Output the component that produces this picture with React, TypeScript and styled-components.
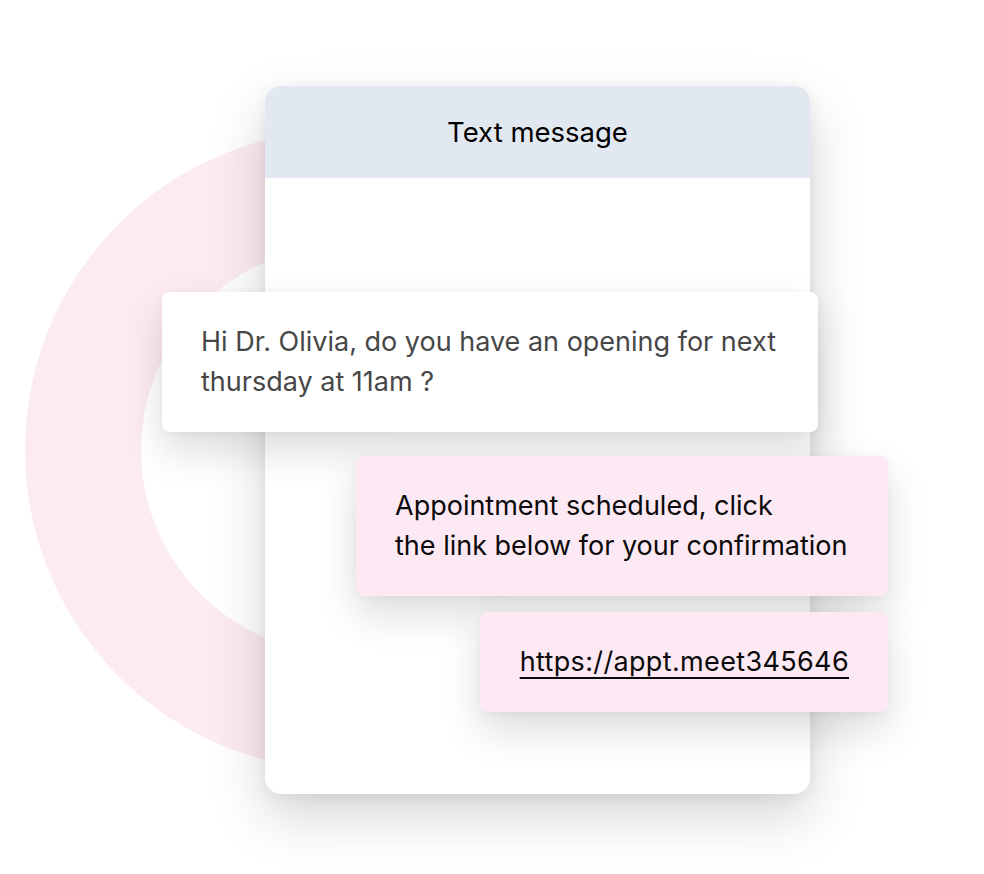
import React from "react";
import styled, { createGlobalStyle } from "styled-components";

const Global = createGlobalStyle`
  html, body { margin: 0; padding: 0; background: #ffffff; }
  body { font-family: Inter, "Noto Sans", "Liberation Sans", sans-serif; }
  * { box-sizing: border-box; }
`;

const Stage = styled.div`
  position: relative;
  width: 984px;
  height: 874px;
  overflow: hidden;
  display: flex;
  flex-direction: column;
  align-items: flex-start;
`;

const Ring = styled.div`
  position: absolute;
  left: 25px;
  top: 130px;
  width: 640px;
  height: 640px;
  border-radius: 50%;
  border: 116px solid #fdebf2;
  z-index: 0;
`;

const Card = styled.section`
  position: relative;
  z-index: 1;
  margin: 86px 0 0 265px;
  width: 545px;
  height: 708px;
  background: #ffffff;
  border-radius: 16px;
  box-shadow: 0 22px 55px rgba(0, 0, 0, 0.17), 0 4px 14px rgba(0, 0, 0, 0.06);
  display: flex;
  flex-direction: column;
`;

const Header = styled.header`
  height: 92px;
  background: #e2e8f0;
  border-radius: 16px 16px 0 0;
  display: flex;
  align-items: center;
  justify-content: center;
  font-size: 27.5px;
  font-weight: 400;
  color: #000;
`;

const Body = styled.div`
  display: flex;
  flex-direction: column;
  padding-top: 114px;
`;

const Bubble = styled.div<{
  $ml: number;
  $mr: number;
  $mt: number;
  $h: number;
  $tone: "white" | "pink";
  $align?: "left" | "right";
}>`
  margin: ${(p) => p.$mt}px ${(p) => p.$mr}px 0 ${(p) => p.$ml}px;
  height: ${(p) => p.$h}px;
  padding: 0 39px;
  border-radius: 8px;
  background: ${(p) => (p.$tone === "white" ? "#ffffff" : "#fde9f3")};
  color: ${(p) => (p.$tone === "white" ? "#474747" : "#0a0a0a")};
  box-shadow: 0 18px 40px rgba(0, 0, 0, 0.14), 0 2px 8px rgba(0, 0, 0, 0.04);
  display: flex;
  flex-direction: column;
  justify-content: center;
  align-items: ${(p) => (p.$align === "right" ? "flex-end" : "flex-start")};
  font-size: 27px;
  line-height: 40px;
  white-space: nowrap;
`;

const Link = styled.a`
  color: #0a0a0a;
  text-decoration: underline;
  text-underline-offset: 6px;
  text-decoration-thickness: 1.5px;
  letter-spacing: 0.35px;
`;

export default function App() {
  return (
    <>
      <Global />
      <Stage>
        <Ring />
        <Card>
          <Header>Text message</Header>
          <Body>
            <Bubble $ml={-103} $mr={-8} $mt={0} $h={140} $tone="white">
              <span>Hi Dr. Olivia, do you have an opening for next</span>
              <span>thursday at 11am ?</span>
            </Bubble>
            <Bubble $ml={91} $mr={-78} $mt={24} $h={140} $tone="pink">
              <span>Appointment scheduled, click</span>
              <span>the link below for your confirmation</span>
            </Bubble>
            <Bubble $ml={215} $mr={-78} $mt={16} $h={100} $tone="pink" $align="right">
              <Link>https://appt.meet345646</Link>
            </Bubble>
          </Body>
        </Card>
      </Stage>
    </>
  );
}
